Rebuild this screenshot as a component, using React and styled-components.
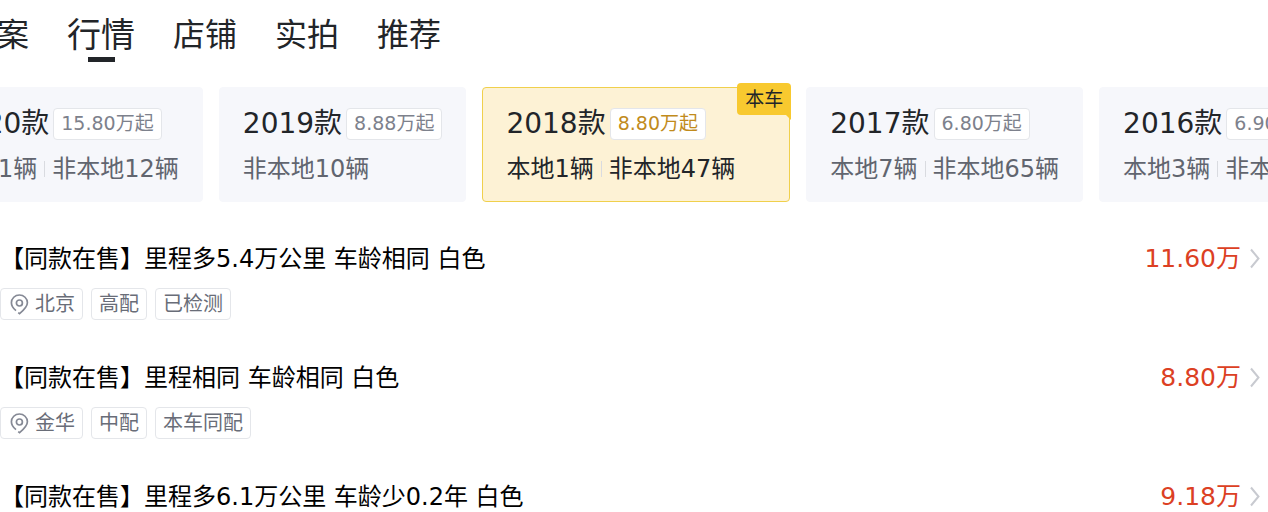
import React, { useState } from 'react'
import styled, { createGlobalStyle } from 'styled-components'

const GlobalStyle = createGlobalStyle`
  * {
    box-sizing: border-box;
  }
  body {
    margin: 0;
    background: #fff;
    color: #000;
    font-family: 'DejaVu Sans', 'Noto Sans CJK SC', sans-serif;
  }
`

const Page = styled.main`
  overflow: hidden;
`

const Tabs = styled.nav`
  display: flex;
  gap: 38px;
  height: 70px;
  margin-left: -35px;
`

const Tab = styled.a`
  display: flex;
  flex: none;
  flex-direction: column;
  align-items: center;
  color: #222529;
  font-size: ${({ $active }) => ($active ? 34 : 32)}px;
  line-height: 43px;
  padding-top: 14px;
  text-decoration: none;
`

const Underline = styled.span`
  width: 27px;
  height: 5px;
  background: #222529;
`

const Years = styled.div`
  display: flex;
  gap: 16px;
  margin: 17px 0 0 -74px;
`

const YearCard = styled.button`
  position: relative;
  display: flex;
  flex: none;
  flex-direction: column;
  gap: 12px;
  height: 115px;
  padding: 19px ${({ $active }) => ($active ? 54 : 23)}px 0 23px;
  border: 1px solid ${({ $active }) => ($active ? '#f0d04c' : '#f6f7fb')};
  border-radius: 4px;
  background: ${({ $active }) => ($active ? '#fdf2d5' : '#f6f7fb')};
  color: ${({ $active }) => ($active ? '#222529' : '#61656f')};
  font-family: inherit;
  text-align: left;
  cursor: pointer;
`

const YearTitle = styled.span`
  display: flex;
  align-items: center;
  gap: 4px;
  color: #222529;
  font-size: 28px;
  line-height: 34px;
`

const StartPrice = styled.span`
  height: 32px;
  padding: 0 7px;
  border: 1px solid #e4e6ea;
  border-radius: 4px;
  background: #fff;
  color: ${({ $active }) => ($active ? '#c18b1c' : '#7d818c')};
  font-size: 19px;
  line-height: 28px;
`

const Counts = styled.span`
  display: flex;
  align-items: center;
  font-size: 24px;
  line-height: 32px;
`

const Divider = styled.span`
  width: 1px;
  height: 16px;
  margin: 0 7px;
  background: #d9dbe0;
`

const Badge = styled.span`
  position: absolute;
  top: -5px;
  right: -2px;
  padding: 0 8px;
  border-radius: 4px 4px 0 4px;
  background: #f8c92f;
  color: #222529;
  font-size: 19px;
  line-height: 32px;

  &::after {
    content: '';
    position: absolute;
    top: 100%;
    right: 0;
    border-top: 5px solid #f8c92f;
    border-left: 5px solid transparent;
  }
`

const Cars = styled.ul`
  display: flex;
  flex-direction: column;
  gap: 38px;
  margin: 0;
  padding: 37px 8px 0 0;
  list-style: none;
`

const Car = styled.li`
  display: flex;
  flex-direction: column;
  gap: 9px;
`

const CarLink = styled.a`
  display: flex;
  align-items: center;
  color: #000;
  font-size: 24px;
  line-height: 40px;
  text-decoration: none;
`

const CarName = styled.span`
  flex: 1;
`

const Price = styled.span`
  margin-right: 9px;
  color: #dc4023;
  font-size: 25px;
`

const Labels = styled.div`
  display: flex;
  gap: 8px;
`

const Label = styled.span`
  display: flex;
  align-items: center;
  gap: 5px;
  height: 32px;
  padding: 0 7px;
  border: 1px solid #e4e6ea;
  border-radius: 4px;
  color: #696d78;
  font-size: 20px;
  line-height: 30px;
`

const PinIcon = () => (
  <svg width="22" height="22" viewBox="0 0 22 22" fill="none" stroke="#858995" strokeWidth="1.7">
    <path d="M8 17.6 C5.2 15.4 3.4 13 3.4 9.8 C3.4 5.4 7 2 11.4 2 C15.8 2 19.4 5.4 19.4 9.8 C19.4 13.8 16.2 16.8 11.6 20.6 L10.2 19.6" />
    <circle cx="11.4" cy="10" r="3" />
  </svg>
)

const ArrowIcon = () => (
  <svg width="10" height="22" viewBox="0 0 10 22" fill="none" stroke="#c8cad0" strokeWidth="2">
    <path d="M1 1.5 L8.5 10.5 L1 19.5" />
  </svg>
)

const tabs = ['档案', '行情', '店铺', '实拍', '推荐']

const years = [
  { year: '2020款', price: '15.80万起', counts: ['本地1辆', '非本地12辆'] },
  { year: '2019款', price: '8.88万起', counts: ['非本地10辆'] },
  { year: '2018款', price: '8.80万起', counts: ['本地1辆', '非本地47辆'], own: true },
  { year: '2017款', price: '6.80万起', counts: ['本地7辆', '非本地65辆'] },
  { year: '2016款', price: '6.90万起', counts: ['本地3辆', '非本地40辆'] },
]

const cars = [
  {
    name: '【同款在售】里程多5.4万公里 车龄相同 白色',
    price: '11.60万',
    city: '北京',
    labels: ['高配', '已检测'],
  },
  {
    name: '【同款在售】里程相同 车龄相同 白色',
    price: '8.80万',
    city: '金华',
    labels: ['中配', '本车同配'],
  },
  {
    name: '【同款在售】里程多6.1万公里 车龄少0.2年 白色',
    price: '9.18万',
    labels: [],
  },
]

const App = () => {
  const [tab, setTab] = useState('行情')
  const [year, setYear] = useState('2018款')

  return (
    <Page>
      <GlobalStyle />
      <Tabs>
        {tabs.map((name) => (
          <Tab key={name} href="#" $active={name === tab} onClick={() => setTab(name)}>
            {name}
            {name === tab && <Underline />}
          </Tab>
        ))}
      </Tabs>
      <Years>
        {years.map((item) => {
          const active = item.year === year
          return (
            <YearCard key={item.year} $active={active} onClick={() => setYear(item.year)}>
              <YearTitle>
                {item.year}
                <StartPrice $active={active}>{item.price}</StartPrice>
              </YearTitle>
              <Counts>
                {item.counts.map((count, i) => (
                  <React.Fragment key={count}>
                    {i > 0 && <Divider />}
                    {count}
                  </React.Fragment>
                ))}
              </Counts>
              {item.own && <Badge>本车</Badge>}
            </YearCard>
          )
        })}
      </Years>
      <Cars>
        {cars.map((car) => (
          <Car key={car.name}>
            <CarLink href="#">
              <CarName>{car.name}</CarName>
              <Price>{car.price}</Price>
              <ArrowIcon />
            </CarLink>
            {car.city && (
              <Labels>
                <Label>
                  <PinIcon />
                  {car.city}
                </Label>
                {car.labels.map((label) => (
                  <Label key={label}>{label}</Label>
                ))}
              </Labels>
            )}
          </Car>
        ))}
      </Cars>
    </Page>
  )
}

export default App
